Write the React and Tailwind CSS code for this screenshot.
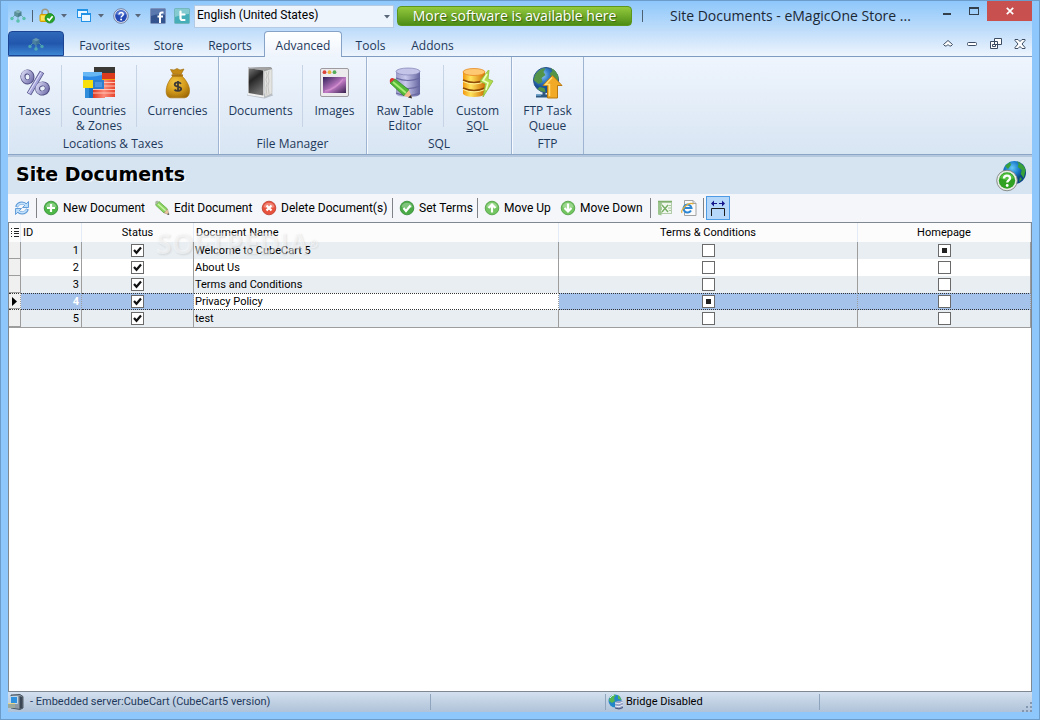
import { useState } from 'react'

const TABS = [
  { name: 'Favorites', width: 'w-[73px]' },
  { name: 'Store', width: 'w-[55px]' },
  { name: 'Reports', width: 'w-[68px]' },
  { name: 'Advanced', width: 'w-[78px]' },
  { name: 'Tools', width: 'w-[57px]' },
  { name: 'Addons', width: 'w-[67px]' },
]

const DOCUMENTS = [
  { id: 1, name: 'Welcome to CubeCart 5' },
  { id: 2, name: 'About Us' },
  { id: 3, name: 'Terms and Conditions' },
  { id: 4, name: 'Privacy Policy' },
  { id: 5, name: 'test' },
]

/* ---------- icons ---------- */

function LogoIcon({ className = '' }) {
  return (
    <svg viewBox="0 0 16 16" className={`size-4 shrink-0 ${className}`}>
      <path d="M5 7l-3 3M11 7l3 3M8 9v4" stroke="#6fb3b5" strokeWidth="1" />
      <path d="M8 2l3.500 1.700v3.800L8 9.200 4.500 7.500V3.700z" fill="#4b7f8c" />
      <path d="M8 2l3.500 1.700L8 5.400 4.500 3.700z" fill="#7fb0b5" />
      <path d="M8 5.400v3.800L4.500 7.500V3.700z" fill="#5c939b" />
      <circle cx="2" cy="10.500" r="1.700" fill="#5cc0ae" />
      <circle cx="14" cy="10.500" r="1.700" fill="#5cc0ae" />
      <circle cx="8" cy="13" r="1.800" fill="#5cc0ae" />
    </svg>
  )
}

function LockIcon() {
  return (
    <svg viewBox="0 0 16 16" className="size-4 shrink-0">
      <path d="M3 8V4.500a3.200 3.200 0 0 1 6.400 0V6" fill="none" stroke="#9c9a86" strokeWidth="1.600" />
      <rect x="1" y="6.500" width="10" height="7" rx="1" fill="#f5d422" stroke="#cf9d0b" />
      <path d="M2 9h8M2 11h8" stroke="#fff09a" />
      <circle cx="10.800" cy="10.300" r="4.700" fill="#27a52b" stroke="#178019" strokeWidth=".8" />
      <path d="M8.300 10.300l2 2 3.300-4" fill="none" stroke="#fff" strokeWidth="1.700" />
    </svg>
  )
}

function WindowsIcon() {
  return (
    <svg viewBox="0 0 16 16" className="size-4 shrink-0" fill="#e9f5ff" stroke="#2292e6">
      <rect x="1.500" y="1.500" width="10" height="8" />
      <path d="M1.500 2.500h10" />
      <rect x="5.500" y="5.500" width="9" height="8" />
      <path d="M5.500 6.500h9" />
    </svg>
  )
}

function HelpIcon() {
  return (
    <svg viewBox="0 0 16 16" className="size-4 shrink-0">
      <circle cx="8" cy="8" r="7.300" fill="#dfe6f5" stroke="#6b7797" strokeWidth=".9" />
      <circle cx="8" cy="8" r="5.900" fill="#2549b5" />
      <path d="M3 6a5.300 5.300 0 0 1 10 0q-5 3-10 0" fill="#6a8ce0" opacity=".7" />
      <path d="M6 6.500c0-2.600 4.200-2.500 4.200 0 0 1.500-2.100 1.500-2.100 3" fill="none" stroke="#fff" strokeWidth="1.500" />
      <circle cx="8.100" cy="11.500" r="1" fill="#fff" />
    </svg>
  )
}

function FacebookIcon() {
  return (
    <svg viewBox="0 0 16 16" className="size-4 shrink-0">
      <rect x=".5" y=".5" width="15" height="15" rx="1" fill="#34548f" stroke="#7d93bd" />
      <path d="M1 1h14v6Q8 5 1 8z" fill="#5b78ae" />
      <path d="M10 15V8.500M13.500 4.500H12q-2 0-2 2.200V9M7.500 8.500h5.500" fill="none" stroke="#fff" strokeWidth="2" />
    </svg>
  )
}

function TwitterIcon() {
  return (
    <svg viewBox="0 0 16 16" className="size-4 shrink-0">
      <rect x=".5" y=".5" width="15" height="15" rx="1" fill="#45aeb8" stroke="#74b7bd" />
      <path d="M1 1h14v5Q8 6 1 9z" fill="#83cbd0" />
      <path d="M6.500 3.500v6.500q0 2 2 2H10.500M6.500 6.500h4" fill="none" stroke="#fff" strokeWidth="2.200" strokeLinecap="round" />
    </svg>
  )
}

function TaxesIcon() {
  return (
    <svg viewBox="0 0 32 32" className="size-8">
      <defs>
        <linearGradient id="tax" x1="0" y1="0" x2="1" y2="1">
          <stop offset="0" stopColor="#d5d5f2" />
          <stop offset="1" stopColor="#7775ae" />
        </linearGradient>
      </defs>
      <g fill="none" transform="translate(1 1)">
        <g stroke="#4d4b80">
          <ellipse cx="7.500" cy="9" rx="4.500" ry="5" strokeWidth="5" transform="rotate(-12 7.500 9)" />
          <ellipse cx="22.500" cy="20.500" rx="5" ry="4.500" strokeWidth="5" transform="rotate(-20 22.500 20.500)" />
          <path d="M22 4L9 26" strokeWidth="5" />
        </g>
        <g stroke="url(#tax)">
          <ellipse cx="7.300" cy="8.700" rx="4.500" ry="5" strokeWidth="3.600" transform="rotate(-12 7.500 9)" />
          <ellipse cx="22.300" cy="20.200" rx="5" ry="4.500" strokeWidth="3.600" transform="rotate(-20 22.500 20.500)" />
        </g>
        <path d="M21.700 4.500L9.200 25.500" stroke="#a9a8dc" strokeWidth="3.500" />
        <path d="M21 4.500L8.500 25" stroke="#e4e4fa" strokeWidth="1" />
      </g>
    </svg>
  )
}

function FlagsIcon() {
  return (
    <svg viewBox="0 0 32 32" className="size-8">
      <defs>
        <linearGradient id="stripes" x1="0" x2="1">
          <stop offset="0" stopColor="#e23a22" />
          <stop offset=".5" stopColor="#fb8a77" />
          <stop offset="1" stopColor="#e8442d" />
        </linearGradient>
      </defs>
      <path d="M11 0h21v6H11z" fill="#3b3936" />
      <path d="M11 6h21v6H11z" fill="#dc3a1c" />
      <path d="M17 12h15v4H17z" fill="#f6a00c" />
      <path d="M0 5h19v9H0z" fill="#2d8ae6" />
      <path d="M0 5h19v3Q9 11 0 9z" fill="#67b7f5" />
      <path d="M0 13h11v8H0z" fill="#f8e00c" />
      <path d="M2 21h9v10H2z" fill="#1873c4" />
      <path d="M2 21h4v10H2z" fill="#308ddb" />
      <path d="M10 13h22v17H22v1H10z" fill="url(#stripes)" />
      <path d="M20 15.500h12M20 19h12M10 22.500h22M10 26h22" stroke="#ffd0c4" strokeWidth=".9" />
      <path d="M10 13h11v9H10z" fill="#2f7fd0" />
      <path d="M12 15h7v5h-7z" fill="#4c97e0" />
    </svg>
  )
}

function MoneyBagIcon() {
  return (
    <svg viewBox="0 0 32 32" className="size-8">
      <defs>
        <radialGradient id="bag" cx=".4" cy=".3" r=".8">
          <stop offset="0" stopColor="#f4c747" />
          <stop offset=".5" stopColor="#d69e1c" />
          <stop offset="1" stopColor="#9b6605" />
        </radialGradient>
      </defs>
      <path d="M11 7L8.500 2.500 12 3l3-1.500 3 1.500 4-1-3 5.500z" fill="#c58a16" stroke="#986606" strokeWidth=".6" />
      <path d="M11 9h9c4 4 8 10 7.500 15.500-.3 4-2 6-5 6.300H9c-3 0-4.700-2.300-4.800-6C4 19 7 13 11 9z" fill="url(#bag)" stroke="#a87109" strokeWidth=".7" />
      <path d="M10.500 8.300h9.500" stroke="#a9720f" strokeWidth="2.200" strokeLinecap="round" />
      <path d="M19 16.800c-1.500-2-6.300-1.800-6.300.8 0 3 6.500 1.500 6.500 4.200 0 2.500-5 2.800-6.700.8M16 14v10.500" fill="none" stroke="#3e3a35" strokeWidth="1.800" />
    </svg>
  )
}

function BookIcon() {
  return (
    <svg viewBox="0 0 32 32" className="size-8">
      <defs>
        <linearGradient id="book" x1="0" y1="0" x2=".4" y2="1">
          <stop offset="0" stopColor="#7c7c7c" />
          <stop offset=".45" stopColor="#262626" />
          <stop offset="1" stopColor="#6d6d6d" />
        </linearGradient>
      </defs>
      <path d="M2 28.500l17.500 3 8.500-3-1-2H3z" fill="#8b8f95" opacity=".5" />
      <path d="M19 4l8-2v24.500L20 30z" fill="#e4e4e2" stroke="#b5b5b2" strokeWidth=".6" />
      <path d="M21 4.500l1 4-1 4 1 4-1 4 1 8M24 4l-1 5 1 5-1 5 1 8" fill="none" stroke="#bcbcba" strokeWidth=".8" />
      <path d="M3 1l22-1 2 1.500L18 4z" fill="#a3a3a3" stroke="#7d7d7d" strokeWidth=".5" />
      <path d="M3 1l16 2.500v27L3 28z" fill="#f0f0f0" />
      <path d="M3.600 1.200L18.300 3.500v25L3.600 26z" fill="url(#book)" />
    </svg>
  )
}

function PictureIcon() {
  return (
    <svg viewBox="0 0 32 32" className="size-8">
      <defs>
        <linearGradient id="pic" x1="0" y1="0" x2="1" y2="1">
          <stop offset="0" stopColor="#2f2058" />
          <stop offset=".55" stopColor="#c07ac4" />
          <stop offset="1" stopColor="#37214f" />
        </linearGradient>
      </defs>
      <rect x="1.500" y="1.500" width="28" height="28" rx="1.500" fill="#eceaec" stroke="#9d9aa0" />
      <circle cx="5.500" cy="5.200" r="1.900" fill="#d94339" />
      <circle cx="10.500" cy="5.200" r="1.900" fill="#e8b23a" />
      <circle cx="15.500" cy="5.200" r="1.900" fill="#54ad59" />
      <rect x="4" y="10" width="23" height="16" fill="url(#pic)" />
      <path d="M6 24Q17 22 24 12" fill="none" stroke="#f4b5df" strokeWidth="1.500" opacity=".35" />
    </svg>
  )
}

function TableEditorIcon() {
  return (
    <svg viewBox="0 0 32 32" className="size-8">
      <defs>
        <linearGradient id="cyl" x1="0" x2="1">
          <stop offset="0" stopColor="#9c9cc9" />
          <stop offset=".4" stopColor="#c9c9ee" />
          <stop offset="1" stopColor="#64649f" />
        </linearGradient>
      </defs>
      <path d="M7 4v23q1 3 12 3t12-3V4z" fill="url(#cyl)" />
      <ellipse cx="19" cy="4.500" rx="12" ry="3.500" fill="#c4c4e8" stroke="#8080b5" strokeWidth=".7" />
      <path d="M7 11q12 5 24 0M7 19q12 5 24 0M7 26q12 5 24 0" fill="none" stroke="#6868a1" strokeWidth="1.200" />
      <path d="M1 16l5-4 14 11-5 6z" fill="#54b737" stroke="#2f8323" strokeWidth=".7" />
      <path d="M4 15l13 11" stroke="#a6ed74" strokeWidth="2" />
      <path d="M1 16l5-4-2.500-1Q0 11 1 16z" fill="#d93932" />
      <path d="M15 29l5-6 3 8z" fill="#f4bb8c" />
      <path d="M19 30.500l3-2.500 1 3.500z" fill="#38332f" />
    </svg>
  )
}

function CustomSqlIcon() {
  return (
    <svg viewBox="0 0 32 32" className="size-8">
      <defs>
        <linearGradient id="gold" x1="0" x2="1">
          <stop offset="0" stopColor="#f19810" />
          <stop offset=".35" stopColor="#ffe35c" />
          <stop offset="1" stopColor="#d06e04" />
        </linearGradient>
      </defs>
      <path d="M1 5v22q3 3 11 3t11-3V5z" fill="url(#gold)" />
      <ellipse cx="12" cy="5" rx="11" ry="3.500" fill="#ffc873" stroke="#e78a22" strokeWidth=".8" />
      <path d="M1 13q11 5 22 0M1 21q11 5 22 0" fill="none" stroke="#8e4a06" strokeWidth="1.600" />
      <path d="M1 14.500q11 5 22 0M1 22.500q11 5 22 0" fill="none" stroke="#fff09a" strokeWidth="1" />
      <path d="M26.500 3L18 14l5.500 3-2.500 13 10-16-5-2 1-8.500z" fill="#b3dc4e" stroke="#8cbc3a" strokeWidth=".8" />
      <path d="M25 7l-4 6.500 5 2.500-2 7" fill="none" stroke="#edffc2" strokeWidth="1.600" />
    </svg>
  )
}

function FtpIcon() {
  return (
    <svg viewBox="0 0 32 32" className="size-8">
      <defs>
        <radialGradient id="globe" cx=".35" cy=".3">
          <stop offset="0" stopColor="#9bd2fa" />
          <stop offset=".5" stopColor="#3b83cb" />
          <stop offset="1" stopColor="#174f94" />
        </radialGradient>
      </defs>
      <circle cx="14" cy="13" r="12.500" fill="url(#globe)" stroke="#285287" />
      <path d="M3.500 7q5-6 10-6l-2 4 2 3-4 3 1 4-4 2-5-4zM18.500 1q6 2 8 9l-1 7-4-4-4-6 3-3zM7.500 20l5 1 1 4q-5 0-8-3z" fill="#539448" />
      <path d="M12 25v4M4 29h14" stroke="#2f5881" strokeWidth="3" />
      <path d="M4 28h5" stroke="#6ea4cf" strokeWidth="1.500" />
      <path d="M20.500 8.500L30 18.500h-4.500V31H15.500V18.500H11z" fill="#f2aa26" stroke="#b87a10" />
      <path d="M20 10.500l-6.500 7h4V29" fill="none" stroke="#ffdc78" strokeWidth="1.500" />
    </svg>
  )
}

function HelpGlobeIcon() {
  return (
    <svg viewBox="0 0 32 32" className="size-8">
      <defs>
        <radialGradient id="helpglobe" cx=".4" cy=".3">
          <stop offset="0" stopColor="#66c8f7" />
          <stop offset=".6" stopColor="#1b7bcb" />
          <stop offset="1" stopColor="#0b4687" />
        </radialGradient>
      </defs>
      <circle cx="18.500" cy="12.500" r="11.500" fill="url(#helpglobe)" />
      <path d="M21 1.300q7 3 8.700 8.700l-2 8-3-4 1-4-4-3 1-3zM9 6l5-4 1 3-3 4zM24 17l2 2-3 3z" fill="#37a03b" />
      <circle cx="11" cy="20.500" r="10.300" fill="#e8ece8" stroke="#7d827f" strokeWidth=".9" />
      <circle cx="11" cy="20.500" r="8.200" fill="#2fa224" />
      <path d="M4 18a7.500 7.500 0 0 1 14 0q-7 4-14 0" fill="#66cd50" opacity=".7" />
      <path d="M8 18.500c0-4 6-3.700 6-.3 0 2.200-2.800 2.200-2.800 4.300" fill="none" stroke="#fff" strokeWidth="2.300" />
      <circle cx="11.200" cy="25.500" r="1.400" fill="#fff" />
    </svg>
  )
}

function RefreshIcon() {
  return (
    <svg viewBox="0 0 16 16" className="size-4 shrink-0" fill="none">
      <path d="M2.500 7Q4 3 8 3q2.500 0 4 2M13.500 9Q12 13 8 13q-2.500 0-4-2" stroke="#5a96d6" strokeWidth="3" />
      <path d="M14.500 1.500v6H8.500zM1.500 14.500v-6h6z" fill="#b9dcf9" stroke="#5a96d6" strokeWidth=".9" />
      <path d="M3 6.500Q4.500 3.300 8 3.300q2.500 0 4 2M13 9.500q-1.500 3.200-5 3.200-2.500 0-4-2" stroke="#c4e2fc" strokeWidth="1.500" />
    </svg>
  )
}

function RoundIcon({ color, edge, path }) {
  return (
    <svg viewBox="0 0 16 16" className="size-4 shrink-0">
      <circle cx="8" cy="8" r="6.800" fill={color} stroke={edge} strokeWidth=".8" />
      <path d="M2.500 7a5.700 5.700 0 0 1 11 0q-5.500 3-11 0" fill="#fff" opacity=".3" />
      <path d={path} fill="none" stroke="#fff" strokeWidth="2.200" />
    </svg>
  )
}

function PencilIcon() {
  return (
    <svg viewBox="0 0 16 16" className="size-4 shrink-0">
      <path d="M1.500 5L5 1.500l8.500 7.500-3.500 4z" fill="#8bd35f" stroke="#61a945" strokeWidth=".8" />
      <path d="M4 4l8 7" stroke="#c9f4a8" strokeWidth="1.500" />
      <path d="M10 13l3.500-4 1.500 5.500z" fill="#ecc79b" stroke="#9a8a7a" strokeWidth=".5" />
      <path d="M13 14.500l1.500-1.500.7 2z" fill="#555" />
      <path d="M1.500 5L5 1.500l-1.500-.7Q.5.500 1.500 5z" fill="#a7b7a0" />
    </svg>
  )
}

function ExcelIcon() {
  return (
    <svg viewBox="0 0 16 16" className="size-4 shrink-0">
      <rect x="4.500" y="2.500" width="10" height="11" fill="#eef5eb" stroke="#b3cbab" />
      <path d="M11 5.500h3M11 8h3M11 10.500h3" stroke="#a5c79b" />
      <path d="M1 1.500L4.500 1v14.500L1 14.500z" fill="#9cc48d" />
      <path d="M1 1.500h14" stroke="#7fae6d" strokeWidth="1.500" />
      <path d="M5 5l6 7M11 5l-6 7" stroke="#fff" strokeWidth="3" />
      <path d="M5 5l6 7M11 5l-6 7" stroke="#79ae67" strokeWidth="1.600" />
    </svg>
  )
}

function BrowserIcon() {
  return (
    <svg viewBox="0 0 16 16" className="size-4 shrink-0">
      <path d="M3.500.5h8.500l3 3v12H3.500z" fill="#fafafa" stroke="#a2a2a2" />
      <path d="M12 .5v3h3" fill="#ddd" stroke="#a2a2a2" />
      <path d="M10 10.500A4 4 0 1 1 10.500 8H4" fill="none" stroke="#2c86d4" strokeWidth="2" />
      <path d="M1 13Q-.5 11 4 6.500T12.500 4" fill="none" stroke="#e5ad35" strokeWidth="1.100" />
    </svg>
  )
}

function FitColumnsIcon() {
  return (
    <svg viewBox="0 0 16 16" className="size-4 shrink-0">
      <path d="M1 3.500L4 .5V3h3v1H4v2.500zM15 3.500L12 .5V3H9v1h3v2.500z" fill="#16168c" />
      <path d="M1.500 16V8.500h13V16" fill="none" stroke="#1c1c1c" />
    </svg>
  )
}

function ServerIcon() {
  return (
    <svg viewBox="0 0 16 16" className="size-4 shrink-0">
      <path d="M3 1l9-.5 3 2V14l-3 1.500L3 14z" fill="#8d9aa6" stroke="#33404c" strokeWidth=".8" />
      <path d="M11.500 2l3 1v11l-3 1z" fill="#3a4653" />
      <path d="M2.500 2.500h7v7h-7z" fill="#2f91dd" stroke="#dceaf5" strokeWidth=".8" />
      <path d="M0 9h7v5H0z" fill="#e8d48b" />
      <path d="M0 11h7M0 13h7" stroke="#517fae" />
    </svg>
  )
}

function BridgeIcon() {
  return (
    <svg viewBox="0 0 16 16" className="size-4 shrink-0">
      <circle cx="7" cy="7" r="6.500" fill="#2286c9" />
      <path d="M2 3q3-3 6-2L6 4l1 3-3 2-3-2zM10 1q3 2 3.500 5L10 5z" fill="#56b751" />
      <path d="M2 4q2-3 4-3" stroke="#d6f4ff" fill="none" />
      <path d="M7 8q4-2 8-1v7q-4 3-8 0z" fill="#96a2c5" />
      <path d="M7 9q4 2 8-1M7 12q4 2 8-1" fill="none" stroke="#eef1fb" />
      <path d="M7 14q4 2 8-.5" fill="none" stroke="#46557f" />
    </svg>
  )
}

function Arrow() {
  return (
    <svg viewBox="0 0 6 4" className="h-1 w-1.5">
      <path d="M0 0h6L3 3.500z" fill="#596779" />
    </svg>
  )
}

/* ---------- title bar ---------- */

function QuickButton({ label, children, arrow }) {
  return (
    <button type="button" aria-label={label} className="flex items-center gap-1.5">
      {children}
      {arrow && <Arrow />}
    </button>
  )
}

function TitleBar() {
  return (
    <header className="flex h-[30px] items-center pl-0.5">
      <LogoIcon />
      <span className="ml-1.5 h-3 w-px bg-[#4d6175]" />
      <div className="ml-1.5 flex gap-[9px]">
        <QuickButton label="License" arrow><LockIcon /></QuickButton>
        <QuickButton label="Windows" arrow><WindowsIcon /></QuickButton>
        <QuickButton label="Help" arrow><HelpIcon /></QuickButton>
      </div>
      <div className="ml-[9px] flex gap-2">
        <QuickButton label="Facebook"><FacebookIcon /></QuickButton>
        <QuickButton label="Twitter"><TwitterIcon /></QuickButton>
      </div>
      <div className="relative ml-1 w-[200px]">
        <select
          aria-label="Language"
          className="block h-[23px] w-full appearance-none border border-[#b5cbe4] bg-[#edf4fc] pb-0.5 pl-0.5 font-[Roboto,sans-serif] text-xs leading-4 text-black"
        >
          <option>English (United States)</option>
        </select>
        <span className="pointer-events-none absolute right-1 top-2.5"><Arrow /></span>
      </div>
      <button
        type="button"
        className="ml-[3px] flex h-5 w-[235px] shrink-0 items-center justify-center rounded border border-[#5d961c] bg-linear-to-b from-[#94ca3d] to-[#4d8d14] text-sm text-white [text-shadow:1px_1px_1px_#3a6410]"
      >
        More software is available here
      </button>
      <span className="ml-2.5 h-3 w-px bg-[#4d6175]" />
      <h1 className="min-w-0 flex-1 truncate pl-[27px] text-sm leading-5 text-[#1b2836]">
        Site Documents - eMagicOne Store ...
      </h1>
      <div className="flex self-start">
        <button type="button" aria-label="Minimize" className="flex h-[19px] w-[27px] items-center justify-center">
          <span className="mt-1.5 h-0.5 w-2 bg-[#333f4b]" />
        </button>
        <button type="button" aria-label="Maximize" className="flex h-[19px] w-[27px] items-center justify-center">
          <span className="h-2 w-2.5 border border-t-2 border-[#333f4b]" />
        </button>
        <button type="button" aria-label="Close" className="flex h-5 w-[45px] items-center justify-center bg-[#c8504f]">
          <svg viewBox="0 0 8 8" className="size-2">
            <path d="M.8.800l6.400 6.400M7.200.800L.8 7.200" stroke="#fff" strokeWidth="1.700" />
          </svg>
        </button>
      </div>
    </header>
  )
}

function TabBar({ active, onSelect }) {
  return (
    <div className="flex h-[26px] items-end border-b border-[#7f9bc0]">
      <button
        type="button"
        aria-label="Application menu"
        className="mr-1 flex h-[25px] w-14 items-center justify-center rounded-t-sm border border-[#1b4594] bg-linear-to-b from-[#2f69b9] via-[#2257ae] to-[#3c86d2]"
      >
        <LogoIcon className="opacity-70" />
      </button>
      <nav className="flex flex-1">
        {TABS.map((t) => (
          <button
            key={t.name}
            type="button"
            onClick={() => onSelect(t.name)}
            className={`text-xs ${t.width} ${
              active === t.name
                ? '-mb-px h-[26px] rounded-t-sm border border-b-0 border-[#86a3c7] bg-linear-to-b from-white to-[#eef4fc] pt-[3px]'
                : 'h-[25px] pt-[5px]'
            }`}
          >
            {t.name}
          </button>
        ))}
      </nav>
      <div className="mr-1.5 flex gap-3 self-center">
        <button type="button" aria-label="Collapse ribbon">
          <svg viewBox="0 0 12 12" className="size-3" fill="#fff" stroke="#3c4d63"><path d="M1.500 6.500L6 2.500l4.500 4-1.500 1.500H7.500L6 6.500 4.500 8H3z" /></svg>
        </button>
        <button type="button" aria-label="Minimize document">
          <svg viewBox="0 0 12 12" className="size-3" fill="#fff" stroke="#3c4d63"><rect x="1.500" y="4.500" width="9" height="3" rx="1" /></svg>
        </button>
        <button type="button" aria-label="Restore document">
          <svg viewBox="0 0 12 12" className="size-3" fill="#fff" stroke="#3c4d63"><path d="M4.500.500h7v6h-7zM.5 3.500h7v7h-7zM2.500 6.500h3v2h-3z" /></svg>
        </button>
        <button type="button" aria-label="Close document">
          <svg viewBox="0 0 12 12" className="size-3" fill="#fff" stroke="#3c4d63"><path d="M1 1.500h3l2 2 2-2h3v1L8 6l3 3.500v1H8l-2-2-2 2H1v-1L4 6 1 2.500z" /></svg>
        </button>
      </div>
    </div>
  )
}

/* ---------- ribbon ---------- */

function RibbonGroup({ title, children }) {
  return (
    <section className="flex flex-col border-r border-[#9fb4d0] shadow-[inset_1px_0_#f7faff]">
      <div className="flex h-[79px] divide-x divide-[#c6d4e6] pt-2">{children}</div>
      <h2 className="text-center text-xs leading-4">{title}</h2>
    </section>
  )
}

function RibbonButton({ icon, width, children }) {
  return (
    <button type="button" className={`flex h-[62px] flex-col items-center ${width}`}>
      <span className="mt-0.5">{icon}</span>
      <span className="mt-1 text-xs leading-[15px] whitespace-nowrap">{children}</span>
    </button>
  )
}

function Ribbon() {
  return (
    <div className="flex h-[98px] border-b border-[#8ba5c7] bg-linear-to-b from-[#eff5fd] to-[#d8e5f3]">
      <RibbonGroup title="Locations & Taxes">
        <RibbonButton width="w-[54px]" icon={<TaxesIcon />}>Taxes</RibbonButton>
        <RibbonButton width="w-[75px]" icon={<FlagsIcon />}>Countries<br />&amp; Zones</RibbonButton>
        <RibbonButton width="w-[81px]" icon={<MoneyBagIcon />}>Currencies</RibbonButton>
      </RibbonGroup>
      <RibbonGroup title="File Manager">
        <RibbonButton width="w-[84px]" icon={<BookIcon />}>Documents</RibbonButton>
        <RibbonButton width="w-[63px]" icon={<PictureIcon />}>Images</RibbonButton>
      </RibbonGroup>
      <RibbonGroup title="SQL">
        <RibbonButton width="w-[77px]" icon={<TableEditorIcon />}>Raw <u>T</u>able<br />Editor</RibbonButton>
        <RibbonButton width="w-[67px]" icon={<CustomSqlIcon />}>Custom<br /><u>S</u>QL</RibbonButton>
      </RibbonGroup>
      <RibbonGroup title="FTP">
        <RibbonButton width="w-[71px]" icon={<FtpIcon />}>FTP Task<br />Queue</RibbonButton>
      </RibbonGroup>
    </div>
  )
}

/* ---------- toolbar ---------- */

function ToolButton({ icon, width = '', children }) {
  return (
    <button type="button" className={`flex items-center gap-1 whitespace-nowrap font-[Roboto,sans-serif] text-xs text-black ${width}`}>
      {icon}
      {children}
    </button>
  )
}

function Separator() {
  return <span className="h-5 w-px bg-[#7f8388]" />
}

function Toolbar() {
  return (
    <div className="flex h-7 items-center gap-1.5 bg-[#f4f6f9] pl-1.5">
      <button type="button" aria-label="Refresh"><RefreshIcon /></button>
      <Separator />
      <ToolButton width="w-[105px]" icon={<RoundIcon color="#4db848" edge="#338a36" path="M8 4v8M4 8h8" />}>New Document</ToolButton>
      <ToolButton width="w-[101px]" icon={<PencilIcon />}>Edit Document</ToolButton>
      <ToolButton width="w-[125px]" icon={<RoundIcon color="#e8523d" edge="#bb3a2b" path="M5.500 5.500l5 5M10.500 5.500l-5 5" />}>Delete Document(s)</ToolButton>
      <Separator />
      <ToolButton width="w-[72px]" icon={<RoundIcon color="#4aab46" edge="#338a36" path="M4.500 8l2.500 3 4.500-5.500" />}>Set Terms</ToolButton>
      <Separator />
      <ToolButton width="w-[70px]" icon={<RoundIcon color="#72c560" edge="#4b9c40" path="M8 12.500V5M4.500 8L8 4.500 11.500 8" />}>Move Up</ToolButton>
      <ToolButton width="w-[84px]" icon={<RoundIcon color="#72c560" edge="#4b9c40" path="M8 3.500V11M4.500 8L8 11.500 11.500 8" />}>Move Down</ToolButton>
      <Separator />
      <div className="flex gap-2">
        <button type="button" aria-label="Export to Excel"><ExcelIcon /></button>
        <button type="button" aria-label="Export to HTML"><BrowserIcon /></button>
      </div>
      <div className="flex items-center gap-0.5">
        <Separator />
        <button type="button" aria-label="Fit columns" aria-pressed="true" className="flex size-6 items-center justify-center border border-[#4d9be4] bg-[#b5d8fa]">
          <FitColumnsIcon />
        </button>
      </div>
    </div>
  )
}

/* ---------- grid ---------- */

function StatusBox({ label }) {
  return (
    <span className="mx-auto grid size-[13px]">
      <input
        type="checkbox"
        defaultChecked
        aria-label={label}
        className="peer col-start-1 row-start-1 size-[13px] appearance-none border border-[#6a6a6a] bg-white"
      />
      <svg viewBox="0 0 13 13" className="pointer-events-none invisible col-start-1 row-start-1 size-[13px] peer-checked:visible">
        <path d="M3 6l2.500 2.800L10 3.500" fill="none" stroke="#111" strokeWidth="2.200" />
      </svg>
    </span>
  )
}

function SquareRadio({ name, checked, onChange, label }) {
  return (
    <input
      type="radio"
      name={name}
      checked={checked}
      onChange={onChange}
      aria-label={label}
      className="mx-auto grid size-[13px] appearance-none place-content-center border border-[#6a6a6a] bg-white before:size-[5px] checked:before:bg-[#222]"
    />
  )
}

function DocumentGrid() {
  const [selected, setSelected] = useState(4)
  const [terms, setTerms] = useState(4)
  const [home, setHome] = useState(1)

  return (
    <div className="relative flex-1 border border-[#7f8791] bg-white">
      <table className="w-full table-fixed border-separate border-spacing-0 font-[Roboto,sans-serif] text-[11px] leading-4 text-black">
        <colgroup>
          <col className="w-3" />
          <col className="w-[61px]" />
          <col className="w-[112px]" />
          <col className="w-[365px]" />
          <col className="w-[299px]" />
          <col />
        </colgroup>
        <thead>
          <tr className="h-[19px] bg-[#fcfcfc] *:border-r *:border-[#e2ebf6] *:p-0 *:font-normal">
            <th aria-label="Row marker">
              <svg viewBox="0 0 8 9" className="mx-auto h-[9px] w-2" stroke="#222"><path d="M0 .500h1M3 .500h5M0 3.500h1M3 3.500h5M0 5.500h1M3 5.500h5M0 8.500h1M3 8.500h5" /></svg>
            </th>
            <th><span className="block pl-0.5 text-left">ID</span></th>
            <th>Status</th>
            <th><span className="block pl-0.5 text-left">Document Name</span></th>
            <th>Terms &amp; Conditions</th>
            <th>Homepage</th>
          </tr>
        </thead>
        <tbody>
          {DOCUMENTS.map((d) => {
            const on = d.id === selected
            const last = d.id === DOCUMENTS.length
            return (
              <tr
                key={d.id}
                onClick={() => setSelected(d.id)}
                className={`*:border-r *:border-r-[#9d9d9d] *:p-0 ${
                  on
                    ? 'bg-[#a4c2ea] *:border-y *:border-dotted *:border-y-[#333]'
                    : d.id % 2 ? 'bg-[#e9eef2]' : 'bg-white'
                } ${last ? 'h-[18px] *:border-b *:border-b-[#9d9d9d]' : 'h-[17px]'}`}
              >
                <td className="bg-[#f0f0f0] shadow-[inset_0_-1px_#9d9d9d]">
                  {on && (
                    <svg viewBox="0 0 5 9" className="mx-auto h-[9px] w-[5px]"><path d="M0 0l5 4.500L0 9z" /></svg>
                  )}
                </td>
                <td><span className={`block pr-0.5 text-right leading-[15px] ${on ? 'font-bold text-white' : ''}`}>{d.id}</span></td>
                <td><StatusBox label={`${d.name} enabled`} /></td>
                <td className={on ? 'bg-white' : ''}><span className="block pl-px leading-[15px]">{d.name}</span></td>
                <td><SquareRadio name="terms" label={`${d.name} as terms`} checked={terms === d.id} onChange={() => setTerms(d.id)} /></td>
                <td><SquareRadio name="home" label={`${d.name} as homepage`} checked={home === d.id} onChange={() => setHome(d.id)} /></td>
              </tr>
            )
          })}
        </tbody>
      </table>
      <span className="pointer-events-none absolute left-[147px] top-1 font-['Open_Sans',sans-serif] text-[28px] leading-8 font-bold text-white/50 [text-shadow:1px_1px_2px_#00000018]">
        SOFTPEDIA<sup className="text-xs">®</sup>
      </span>
    </div>
  )
}

function StatusBar() {
  return (
    <footer className="flex h-5 items-center bg-linear-to-b from-[#d3e0ef] to-[#afc2d8] font-[Roboto,sans-serif] text-[11px]">
      <div className="flex w-[423px] items-center gap-1.5 border-r border-[#8ea5bd]">
        <ServerIcon />
        <span className="whitespace-nowrap">- Embedded server:CubeCart (CubeCart5 version)</span>
      </div>
      <div className="h-4 w-[175px] border-r border-[#8ea5bd]" />
      <div className="flex w-[214px] items-center gap-0.5 border-r border-[#8ea5bd] pl-0.5 text-black">
        <BridgeIcon />
        Bridge Disabled
      </div>
      <svg viewBox="0 0 10 10" className="ml-auto size-2.5 self-end" fill="#8397b0">
        <path d="M8 0h2v2H8zM4 4h2v2H4zM8 4h2v2H8zM0 8h2v2H0zM4 8h2v2H4zM8 8h2v2H8z" />
      </svg>
    </footer>
  )
}

export default function App() {
  const [tab, setTab] = useState('Advanced')

  return (
    <div className="flex min-h-screen flex-col border border-[#6c9cc9] bg-[#8dc7fb] px-[7px] pb-[7px] font-['Open_Sans',sans-serif] text-[#1e395b]">
      <div className="bg-linear-to-b from-[#8dc7fb] via-[#bddcfa] to-[#eff5fd]">
        <TitleBar />
        <TabBar active={tab} onSelect={setTab} />
      </div>
      <Ribbon />
      <div className="flex h-[39px] items-center justify-between border-t-2 border-[#b6c8dd] bg-[#d6e4f1] pl-2 pr-1">
        <h2 className="pb-1 font-['DejaVu_Sans',sans-serif] text-[19px] leading-6 font-bold text-black [text-shadow:1px_1px_#fff]">Site Documents</h2>
        <button type="button" aria-label="Help"><HelpGlobeIcon /></button>
      </div>
      <Toolbar />
      <DocumentGrid />
      <StatusBar />
    </div>
  )
}
